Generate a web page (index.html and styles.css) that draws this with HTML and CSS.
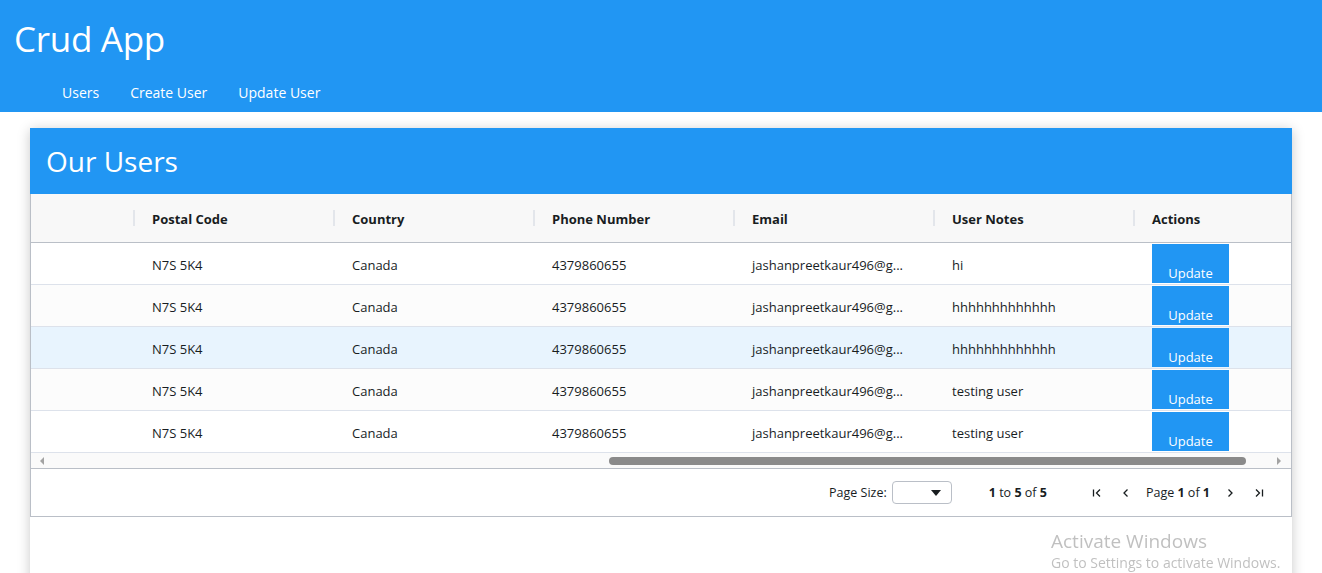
FILE: index.html
```html
<!DOCTYPE html>
<html lang="en">
<head>
<meta charset="utf-8">
<title>Crud App</title>
<link rel="stylesheet" href="styles.css">
</head>
<body>
<header class="topbar">
  <h1 class="brand">Crud App</h1>
  <nav class="nav">
    <a class="nav-link" href="#">Users</a>
    <a class="nav-link" href="#">Create User</a>
    <a class="nav-link" href="#">Update User</a>
  </nav>
</header>

<main class="page">
  <section class="card">
    <div class="card-title"><h2>Our Users</h2></div>
    <div class="grid">
      <div class="grid-viewport">
        <div class="grid-header">
          <div class="hcell first"></div>
          <div class="hcell">Postal Code</div>
          <div class="hcell">Country</div>
          <div class="hcell">Phone Number</div>
          <div class="hcell">Email</div>
          <div class="hcell">User Notes</div>
          <div class="hcell">Actions</div>
        </div>
        <div class="grid-body">
          <div class="row">
            <div class="cell first"></div>
            <div class="cell">N7S 5K4</div>
            <div class="cell">Canada</div>
            <div class="cell">4379860655</div>
            <div class="cell">jashanpreetkaur496@g...</div>
            <div class="cell">hi</div>
            <div class="cell action"><button class="btn-update">Update</button></div>
          </div>
          <div class="row odd">
            <div class="cell first"></div>
            <div class="cell">N7S 5K4</div>
            <div class="cell">Canada</div>
            <div class="cell">4379860655</div>
            <div class="cell">jashanpreetkaur496@g...</div>
            <div class="cell">hhhhhhhhhhhhh</div>
            <div class="cell action"><button class="btn-update">Update</button></div>
          </div>
          <div class="row hover">
            <div class="cell first"></div>
            <div class="cell">N7S 5K4</div>
            <div class="cell">Canada</div>
            <div class="cell">4379860655</div>
            <div class="cell">jashanpreetkaur496@g...</div>
            <div class="cell">hhhhhhhhhhhhh</div>
            <div class="cell action"><button class="btn-update">Update</button></div>
          </div>
          <div class="row odd">
            <div class="cell first"></div>
            <div class="cell">N7S 5K4</div>
            <div class="cell">Canada</div>
            <div class="cell">4379860655</div>
            <div class="cell">jashanpreetkaur496@g...</div>
            <div class="cell">testing user</div>
            <div class="cell action"><button class="btn-update">Update</button></div>
          </div>
          <div class="row">
            <div class="cell first"></div>
            <div class="cell">N7S 5K4</div>
            <div class="cell">Canada</div>
            <div class="cell">4379860655</div>
            <div class="cell">jashanpreetkaur496@g...</div>
            <div class="cell">testing user</div>
            <div class="cell action"><button class="btn-update">Update</button></div>
          </div>
        </div>
      </div>
      <div class="hscroll">
        <span class="arrow-left"></span>
        <div class="track"><div class="thumb"></div></div>
        <span class="arrow-right"></span>
      </div>
      <div class="pager">
        <span class="page-size-label">Page Size:</span>
        <div class="select"><span class="caret"></span></div>
        <span class="summary"><b>1</b> to <b>5</b> of <b>5</b></span>
        <div class="nav-buttons">
          <svg class="pg-icon" viewBox="0 0 12 12" width="12" height="12"><path d="M2.5 2.5v7M9 2.5L5.5 6L9 9.5" fill="none" stroke="#181d1f" stroke-width="1.3"/></svg>
          <svg class="pg-icon" viewBox="0 0 12 12" width="12" height="12"><path d="M7.5 2.5L4 6l3.5 3.5" fill="none" stroke="#181d1f" stroke-width="1.3"/></svg>
          <span class="page-desc">Page <b>1</b> of <b>1</b></span>
          <svg class="pg-icon" viewBox="0 0 12 12" width="12" height="12"><path d="M4.5 2.5L8 6l-3.5 3.5" fill="none" stroke="#181d1f" stroke-width="1.3"/></svg>
          <svg class="pg-icon" viewBox="0 0 12 12" width="12" height="12"><path d="M3 2.5L6.5 6L3 9.5M9.5 2.5v7" fill="none" stroke="#181d1f" stroke-width="1.3"/></svg>
        </div>
      </div>
    </div>
  </section>
</main>

<div class="watermark">
  <div class="wm-title">Activate Windows</div>
  <div class="wm-sub">Go to Settings to activate Windows.</div>
</div>
</body>
</html>
```

FILE: styles.css
```css
* { box-sizing: border-box; }
html, body { margin: 0; padding: 0; }
body {
  font-family: "Open Sans", "Noto Sans", sans-serif;
  background: #fff;
  color: #181d1f;
  overflow: hidden;
  height: 573px;
}

.topbar {
  background: #2196f3;
  height: 112px;
  padding: 15px 0 0 14px;
  color: #fff;
}
.brand {
  margin: 0;
  font-weight: 400;
  font-size: 35px;
  line-height: 48px;
  letter-spacing: -0.3px;
}
.nav {
  display: flex;
  gap: 31px;
  padding-left: 48px;
  margin-top: 20px;
}
.nav-link {
  color: #fff;
  text-decoration: none;
  font-size: 14px;
  line-height: 20px;
}

.page {
  padding: 16px 30px 0 30px;
}
.card {
  background: #fff;
  box-shadow: 0 2px 12px rgba(0,0,0,0.22);
  height: 460px;
}
.card-title {
  background: #2196f3;
  height: 66px;
  padding: 0 0 0 16px;
  display: flex;
  align-items: center;
}
.card-title h2 {
  margin: 0;
  color: #fff;
  font-weight: 400;
  font-size: 28px;
  letter-spacing: 0;
}

.grid {
  border: 1px solid #babfc7;
  border-top: none;
  font-size: 13px;
}
.grid-viewport {
  overflow: hidden;
}
.grid-header {
  display: flex;
  height: 49px;
  background: #f8f8f8;
  border-bottom: 1px solid #babfc7;
}
.hcell {
  flex: 0 0 200px;
  display: flex;
  align-items: center;
  padding-left: 18px;
  padding-top: 2px;
  font-weight: 700;
  position: relative;
  color: #181d1f;
}
.hcell::after {
  content: "";
  position: absolute;
  right: -1px;
  top: 16px;
  width: 2px;
  height: 16px;
  background: #e3e6eb;
}
.hcell.first, .cell.first { flex-basis: 103px; padding: 0; }

.row {
  display: flex;
  height: 42px;
  border-bottom: 1px solid #dde2eb;
  background: #fff;
}
.row.odd { background: #fcfcfc; }
.row.hover { background: #e8f4fe; }
.cell {
  flex: 0 0 200px;
  padding: 0 18px;
  display: flex;
  align-items: center;
  white-space: nowrap;
  min-width: 0;
}
.cell:not(.action) {
  display: block;
  line-height: 41px;
  padding-top: 2px;
}
.cell.action { align-items: flex-start; padding-top: 1px; }
.btn-update {
  width: 77px;
  height: 39px;
  border: none;
  background: #2196f3;
  color: #fff;
  font-family: inherit;
  font-size: 13px;
  display: flex;
  align-items: flex-end;
  justify-content: center;
  padding: 0 0 1px 0;
}

.hscroll {
  display: flex;
  align-items: center;
  height: 15px;
  background: #fafafa;
  padding: 0 6px;
}
.arrow-left {
  width: 0; height: 0;
  border-top: 4px solid transparent;
  border-bottom: 4px solid transparent;
  border-right: 4px solid #a3a3a3;
  margin-left: 3px;
}
.arrow-right {
  width: 0; height: 0;
  border-top: 4px solid transparent;
  border-bottom: 4px solid transparent;
  border-left: 4px solid #a3a3a3;
  margin-right: 4px;
}
.track {
  flex: 1;
  display: flex;
  justify-content: flex-end;
  padding-right: 31px;
}
.thumb {
  width: 637px;
  height: 8px;
  border-radius: 4px;
  background: #8a8a8a;
}

.pager {
  height: 48px;
  border-top: 1px solid #babfc7;
  display: flex;
  align-items: center;
  justify-content: flex-end;
  padding-right: 26px;
  font-size: 12.5px;
}
.page-size-label { margin-right: 5px; }
.select {
  width: 60px;
  height: 23px;
  border: 1px solid #babfc7;
  border-radius: 4px;
  display: flex;
  align-items: center;
  justify-content: flex-end;
  padding-right: 10px;
  margin-right: 37px;
}
.caret {
  width: 0; height: 0;
  border-left: 5px solid transparent;
  border-right: 5px solid transparent;
  border-top: 6px solid #181d1f;
}
.summary { margin-right: 44px; }
.nav-buttons {
  display: flex;
  align-items: center;
  gap: 17px;
}
.page-desc { margin: 0 -3px; }

.watermark {
  position: fixed;
  left: 1051px;
  top: 528px;
  color: rgba(150,150,150,0.6);
  font-family: "Open Sans", sans-serif;
  white-space: nowrap;
}
.wm-title { font-size: 19px; line-height: 26px; }
.wm-sub { font-size: 14px; line-height: 18px; }
```
